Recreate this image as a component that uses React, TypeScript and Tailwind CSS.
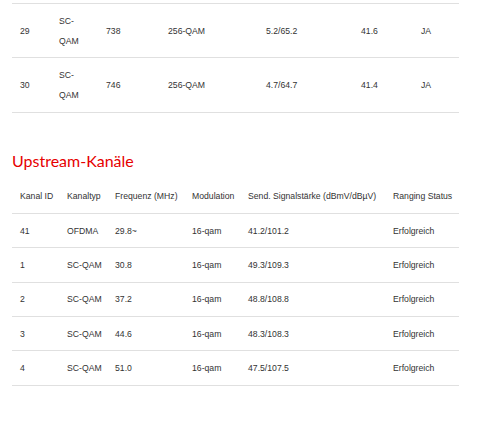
import React from "react";

const topCols = "grid-cols-[39px_47px_62px_98px_95px_60px_46px]";
const upCols = "grid-cols-[47px_48px_77px_56px_145px_74px]";

const topRows = [
  ["29", "SC-QAM", "738", "256-QAM", "5.2/65.2", "41.6", "JA"],
  ["30", "SC-QAM", "746", "256-QAM", "4.7/64.7", "41.4", "JA"],
];

const upHeader = ["Kanal ID", "Kanaltyp", "Frequenz (MHz)", "Modulation", "Send. Signalstärke (dBmV/dBµV)", "Ranging Status"];
const upRows = [
  ["41", "OFDMA", "29.8~", "16-qam", "41.2/101.2", "Erfolgreich"],
  ["1", "SC-QAM", "30.8", "16-qam", "49.3/109.3", "Erfolgreich"],
  ["2", "SC-QAM", "37.2", "16-qam", "48.8/108.8", "Erfolgreich"],
  ["3", "SC-QAM", "44.6", "16-qam", "48.3/108.3", "Erfolgreich"],
  ["4", "SC-QAM", "51.0", "16-qam", "47.5/107.5", "Erfolgreich"],
];

export default function App() {
  return (
    <div className="w-[477px] h-[439px] bg-white overflow-hidden font-['Liberation_Sans',Arial,sans-serif] text-[8.67px] leading-[20px] text-[#333333]">
      <div className="ml-[12px] w-[447px] pt-[3px]">
        <div className="border-t border-[#e0e0e0]">
          {topRows.map((r, i) => (
            <div key={i} className={`grid ${topCols} border-b border-[#e0e0e0]`}>
              {r.map((c, j) => (
                <div key={j} className="flex items-center py-[6.67px] pl-[8px] pr-[8px] break-words">
                  {j === 1 ? <span>SC-<br />QAM</span> : c}
                </div>
              ))}
            </div>
          ))}
        </div>

        <h2 className="mt-[36px] text-[16px] leading-[24px] text-[#e60000] font-['Lato','Open_Sans',sans-serif]">
          Upstream-Kanäle
        </h2>

        <div className="mt-[7px]">
          <div className={`grid ${upCols} border-b border-[#e0e0e0]`}>
            {upHeader.map((h, j) => (
              <div key={j} className="py-[6.67px] pl-[8px] whitespace-nowrap">{h}</div>
            ))}
          </div>
          {upRows.map((r, i) => (
            <div key={i} className={`grid ${upCols} border-b border-[#e0e0e0]`}>
              {r.map((c, j) => (
                <div key={j} className="py-[6.67px] pl-[8px] whitespace-nowrap">{c}</div>
              ))}
            </div>
          ))}
        </div>
      </div>
    </div>
  );
}
